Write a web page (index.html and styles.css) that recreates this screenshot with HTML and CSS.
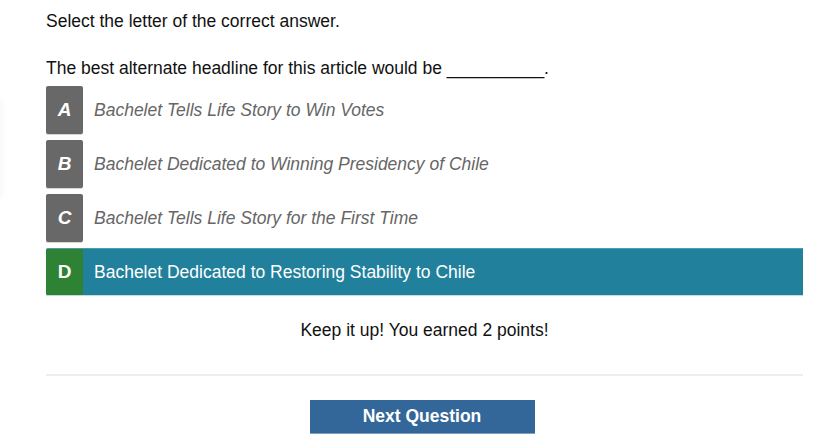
FILE: index.html
```html
<!DOCTYPE html>
<html>
<head>
<meta charset="utf-8">
<link rel="stylesheet" href="styles.css">
</head>
<body>
<div class="edge-shadow"></div>
<main class="quiz">
  <p class="instructions">Select the letter of the correct answer.</p>
  <p class="question">The best alternate headline for this article would be __________.</p>
  <ul class="options">
    <li class="option"><span class="letter">A</span><span class="text">Bachelet Tells Life Story to Win Votes</span></li>
    <li class="option"><span class="letter">B</span><span class="text">Bachelet Dedicated to Winning Presidency of Chile</span></li>
    <li class="option"><span class="letter">C</span><span class="text">Bachelet Tells Life Story for the First Time</span></li>
    <li class="option correct"><span class="letter">D</span><span class="text">Bachelet Dedicated to Restoring Stability to Chile</span></li>
  </ul>
  <p class="feedback">Keep it up! You earned 2 points!</p>
  <hr class="divider">
  <div class="actions"><button class="next">Next Question</button></div>
</main>
</body>
</html>
```
FILE: styles.css
```css
html, body {
  margin: 0;
  padding: 0;
  background: #fff;
}
body {
  font-family: "Liberation Sans", Arial, sans-serif;
  color: #111;
  position: relative;
  height: 440px;
  overflow: hidden;
}
.edge-shadow {
  position: absolute;
  left: -20px;
  top: 100px;
  width: 20px;
  height: 98px;
  box-shadow: 0 0 8px rgba(0, 0, 0, 0.06);
}
.quiz {
  margin: 0 12px 0 46px;
  padding-top: 11px;
}
.instructions {
  margin: 0;
  font-size: 17.5px;
  line-height: 20px;
}
.question {
  margin: 27px 0 0;
  font-size: 17.5px;
  line-height: 20px;
}
.options {
  list-style: none;
  margin: 8px 0 0;
  padding: 0;
  display: flex;
  flex-direction: column;
  gap: 6px;
}
.option {
  display: flex;
  align-items: center;
  height: 48px;
}
.letter {
  width: 37px;
  height: 48px;
  box-sizing: border-box;
  display: flex;
  align-items: center;
  justify-content: center;
  background: #686868;
  color: #fff;
  font-weight: bold;
  font-style: italic;
  font-size: 19px;
  border-radius: 2px;
  box-shadow: 0 1px 0 #d4d4d4;
}
.text {
  margin-left: 11px;
  font-size: 17.5px;
  font-style: italic;
  color: #666;
}
.option.correct {
  background: #21809b;
  border-top: 1px solid #4b9bb1;
  border-bottom: 1px solid #c3dbe2;
  box-sizing: border-box;
  border-radius: 2px 0 0 2px;
}
.option.correct .letter {
  background: #2e8233;
  font-style: normal;
  height: 46px;
  box-shadow: none;
  border-radius: 2px 0 0 2px;
}
.option.correct .text {
  color: #fff;
  font-style: normal;
}
.feedback {
  margin: 24px 0 0;
  text-align: center;
  font-size: 17.5px;
  line-height: 20px;
  color: #111;
}
.divider {
  margin: 34px 0 0;
  border: 0;
  border-top: 2px solid #eeeeee;
}
.actions {
  display: flex;
  justify-content: center;
  margin-top: 24px;
}
.next {
  width: 225px;
  height: 34px;
  margin-right: 5px;
  background: #346799;
  color: #fff;
  border: 0;
  border-bottom: 1px solid #7f9fbf;
  font-family: "Liberation Sans", Arial, sans-serif;
  font-weight: bold;
  font-size: 17.5px;
  padding: 0;
}
```
